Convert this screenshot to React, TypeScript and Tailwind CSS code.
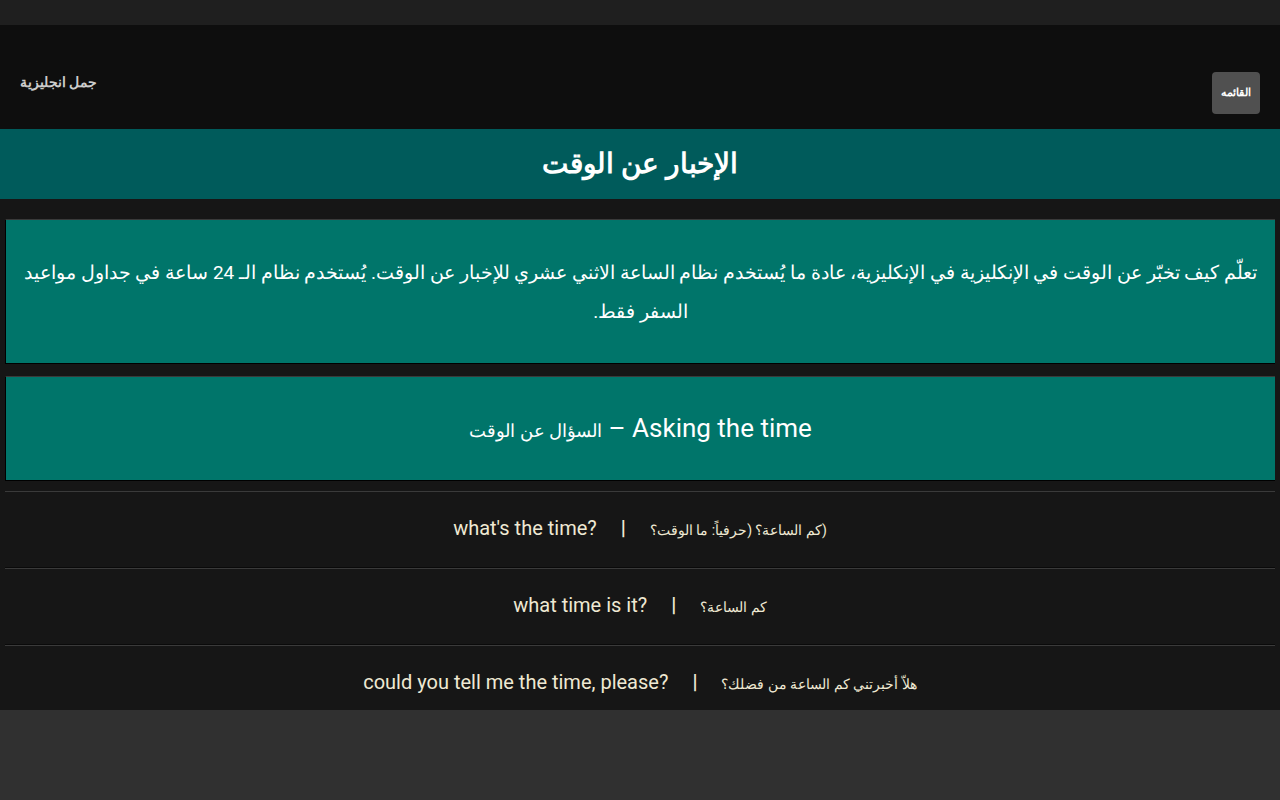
import React from 'react';

const font = { fontFamily: 'Roboto, sans-serif' };

const phrases = [
    { en: "what's the time?", ar: 'كم الساعة؟ (حرفياً: ما الوقت؟', tail: ')' },
    { en: 'what time is it?', ar: 'كم الساعة؟', tail: '' },
    { en: 'could you tell me the time, please?', ar: 'هلاّ أخبرتني كم الساعة من فضلك؟', tail: '' },
];

const App: React.FC = () => {
    return (
        <div className="min-h-screen bg-[#303030]" style={font}>
            <div className="h-[25px] bg-[#1f1f1f]" />

            <header className="h-[104px] bg-[#0e0e0e] flex justify-between px-5">
                <a className="mt-[47px] text-[14px] font-bold text-[#cccccc] leading-5 h-5">جمل انجليزية</a>
                <button className="mt-[47px] w-12 h-[42px] rounded-sm bg-[#505050] text-white text-[11px] font-bold">
                    القائمه
                </button>
            </header>

            <div className="h-[70px] bg-[#005b5b] flex items-center justify-center">
                <h1 dir="rtl" className="text-[28px] font-bold text-white">الإخبار عن الوقت</h1>
            </div>

            <main className="h-[511px] overflow-hidden bg-[#161616] px-[5px] pt-5">
                <section
                    dir="rtl"
                    className="bg-[#00756a] border-t border-t-[#3a3a3a] border-b border-b-black border-l border-l-black px-4 pt-[33px] pb-[32px] text-center text-white text-[19px] leading-[39px]"
                >
                    تعلّم كيف تخبّر عن الوقت في الإنكليزية في الإنكليزية، عادة ما يُستخدم نظام الساعة الاثني عشري للإخبار عن الوقت. يُستخدم نظام الـ 24 ساعة في جداول مواعيد السفر فقط.
                </section>

                <section
                    dir="rtl"
                    className="mt-3 h-[105px] pb-[1px] bg-[#00756a] border-t border-t-[#3a3a3a] border-b border-b-black border-l border-l-black flex items-center justify-center text-white"
                >
                    <span className="text-[26px]">
                        Asking the time – <span className="text-[18px]">السؤال عن الوقت</span>
                    </span>
                </section>

                <div className="mt-[10px]">
                    {phrases.map((p) => (
                        <div
                            key={p.en}
                            className="h-[77px] pb-1 border-t border-t-[#3a3a3a] border-b border-b-[#0a0a0a] flex items-center justify-center text-[#efe9d3]"
                        >
                            <p dir="ltr" className="text-[20px]">
                                {p.en}
                                <span className="mx-6 font-bold">|</span>
                                <span className="text-[14px]">
                                    {p.ar}
                                    {p.tail && <span className="[unicode-bidi:isolate]">{p.tail}</span>}
                                </span>
                            </p>
                        </div>
                    ))}
                </div>
            </main>
        </div>
    );
};

export default App;
